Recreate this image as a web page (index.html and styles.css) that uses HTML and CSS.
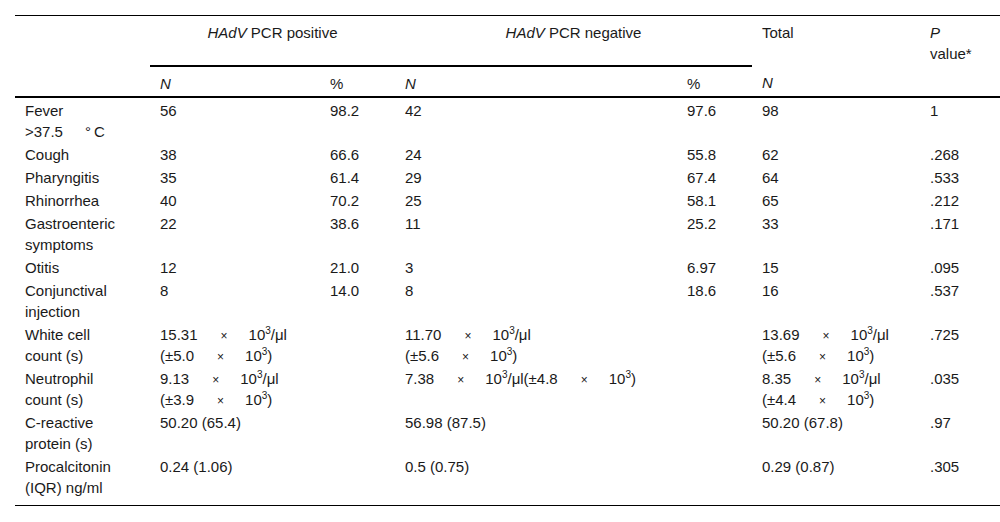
FILE: index.html
```html
<!DOCTYPE html>
<html lang="en">
<head>
<meta charset="utf-8">
<title>HAdV PCR table</title>
<link rel="stylesheet" href="styles.css">
</head>
<body>
<table class="data">
  <colgroup>
    <col class="c1"><col class="c2"><col class="c3"><col class="c4"><col class="c5"><col class="c6"><col class="c7">
  </colgroup>
  <thead>
    <tr class="h1">
      <th class="label-h"></th>
      <th colspan="2" class="group"><i>HAdV</i> PCR positive</th>
      <th colspan="2" class="group"><i>HAdV</i> PCR negative</th>
      <th class="left">Total</th>
      <th class="left pval"><i>P</i> value*</th>
    </tr>
    <tr class="h2">
      <th></th>
      <th class="left"><i>N</i></th>
      <th class="left">%</th>
      <th class="left"><i>N</i></th>
      <th class="left">%</th>
      <th class="left"><i>N</i></th>
      <th></th>
    </tr>
  </thead>
  <tbody>
    <tr><td class="lab">Fever <span class="nw">&gt;37.5<span class="deg">°</span>C</span></td><td>56</td><td>98.2</td><td>42</td><td>97.6</td><td>98</td><td>1</td></tr>
    <tr><td class="lab">Cough</td><td>38</td><td>66.6</td><td>24</td><td>55.8</td><td>62</td><td>.268</td></tr>
    <tr><td class="lab">Pharyngitis</td><td>35</td><td>61.4</td><td>29</td><td>67.4</td><td>64</td><td>.533</td></tr>
    <tr><td class="lab">Rhinorrhea</td><td>40</td><td>70.2</td><td>25</td><td>58.1</td><td>65</td><td>.212</td></tr>
    <tr><td class="lab">Gastroenteric symptoms</td><td>22</td><td>38.6</td><td>11</td><td>25.2</td><td>33</td><td>.171</td></tr>
    <tr><td class="lab">Otitis</td><td>12</td><td>21.0</td><td>3</td><td>6.97</td><td>15</td><td>.095</td></tr>
    <tr><td class="lab">Conjunctival injection</td><td>8</td><td>14.0</td><td>8</td><td>18.6</td><td>16</td><td>.537</td></tr>
    <tr><td class="lab">White cell count (s)</td><td colspan="2">15.31<span class="mul">×</span>10<sup>3</sup>/μl<br>(±5.0<span class="mul">×</span>10<sup>3</sup>)</td><td colspan="2">11.70<span class="mul">×</span>10<sup>3</sup>/μl<br>(±5.6<span class="mul">×</span>10<sup>3</sup>)</td><td>13.69<span class="mul">×</span>10<sup>3</sup>/μl<br>(±5.6<span class="mul">×</span>10<sup>3</sup>)</td><td>.725</td></tr>
    <tr><td class="lab">Neutrophil count (s)</td><td colspan="2">9.13<span class="mul">×</span>10<sup>3</sup>/μl<br>(±3.9<span class="mul">×</span>10<sup>3</sup>)</td><td colspan="2">7.38<span class="mul">×</span>10<sup>3</sup>/μl(±4.8<span class="mul">×</span>10<sup>3</sup>)</td><td>8.35<span class="mul">×</span>10<sup>3</sup>/μl<br>(±4.4<span class="mul">×</span>10<sup>3</sup>)</td><td>.035</td></tr>
    <tr><td class="lab">C-reactive protein (s)</td><td colspan="2">50.20 (65.4)</td><td colspan="2">56.98 (87.5)</td><td>50.20 (67.8)</td><td>.97</td></tr>
    <tr class="last"><td class="lab">Procalcitonin (IQR) ng/ml</td><td colspan="2">0.24 (1.06)</td><td colspan="2">0.5 (0.75)</td><td>0.29 (0.87)</td><td>.305</td></tr>
  </tbody>
</table>
</body>
</html>
```

FILE: styles.css
```css
html, body {
  margin: 0;
  padding: 0;
  background: #ffffff;
}

body {
  font-family: "Liberation Sans", Arial, sans-serif;
  font-size: 15px;
  color: #1a1a1a;
}

.data {
  margin: 15px 0 0 15px;
  width: 985px;
  table-layout: fixed;
  border-collapse: collapse;
  border-top: 1px solid #000;
  border-bottom: 1px solid #000;
  line-height: 21px;
}

.c1 { width: 135px; }
.c2 { width: 170px; }
.c3 { width: 75px; }
.c4 { width: 282px; }
.c5 { width: 75px; }
.c6 { width: 168px; }
.c7 { width: 80px; }

.data th {
  font-weight: normal;
  vertical-align: top;
  padding: 6px 10px 2px 10px;
}

.data th.left {
  text-align: left;
}

.data th.group {
  text-align: center;
  border-bottom: 2px solid #000;
}

.data th.pval {
  padding-right: 22px;
}

.data tr.h2 th {
  border-bottom: 2px solid #000;
}

.data td {
  vertical-align: top;
  text-align: left;
  padding: 2px 10px 0 10px;
}

.data td.lab {
  padding-right: 30px;
}

.data tr.last td {
  padding-bottom: 7px;
}

.nw {
  white-space: nowrap;
}

.deg {
  margin-left: 22px;
  margin-right: 3px;
}

.mul {
  font-size: 12px;
  line-height: 0;
  margin: 0 21px 0 23px;
}

sup {
  font-size: 10px;
  line-height: 0;
  vertical-align: 6px;
}
```
